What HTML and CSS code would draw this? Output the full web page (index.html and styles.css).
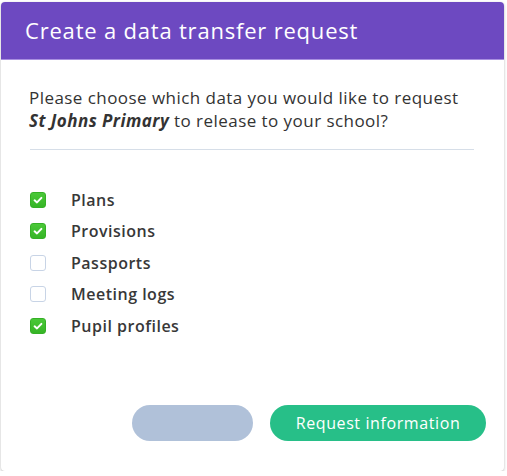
FILE: index.html
```html
<!DOCTYPE html>
<html>
<head>
<meta charset="utf-8">
<link rel="stylesheet" href="styles.css">
</head>
<body>
<div class="modal">
  <div class="modal-header">
    <h1 class="modal-title">Create a data transfer request</h1>
  </div>
  <div class="modal-body">
    <p class="intro">Please choose which data you would like to request <strong><em>St Johns Primary</em></strong> to release to your school?</p>
    <hr class="divider">
    <ul class="options">
      <li class="option"><span class="check checked"><svg viewBox="0 0 16 16" width="16" height="16"><path d="M4.6 8.3 L7 10.4 L11.4 5.9" fill="none" stroke="#fff" stroke-width="2" stroke-linecap="round" stroke-linejoin="round"/></svg></span><span class="label">Plans</span></li>
      <li class="option"><span class="check checked"><svg viewBox="0 0 16 16" width="16" height="16"><path d="M4.6 8.3 L7 10.4 L11.4 5.9" fill="none" stroke="#fff" stroke-width="2" stroke-linecap="round" stroke-linejoin="round"/></svg></span><span class="label">Provisions</span></li>
      <li class="option"><span class="check"></span><span class="label">Passports</span></li>
      <li class="option"><span class="check"></span><span class="label">Meeting logs</span></li>
      <li class="option"><span class="check checked"><svg viewBox="0 0 16 16" width="16" height="16"><path d="M4.6 8.3 L7 10.4 L11.4 5.9" fill="none" stroke="#fff" stroke-width="2" stroke-linecap="round" stroke-linejoin="round"/></svg></span><span class="label">Pupil profiles</span></li>
    </ul>
  </div>
  <div class="modal-footer">
    <button class="btn btn-muted"></button>
    <button class="btn btn-primary">Request information</button>
  </div>
</div>
</body>
</html>
```

FILE: styles.css
```css
html, body {
  margin: 0;
  padding: 0;
  background: #ffffff;
}
body {
  font-family: "Open Sans", "Noto Sans", sans-serif;
  color: #333333;
}
.modal {
  margin: 2px 3px 0 1px;
  width: 503px;
  height: 469px;
  background: #ffffff;
  border-radius: 4px;
  box-shadow: 0 1px 3px rgba(0, 0, 0, 0.28);
  display: flex;
  flex-direction: column;
  overflow: hidden;
}
.modal-header {
  background: #6d49c1;
  height: 57px;
  border-bottom: 1px solid #a88fe0;
  display: flex;
  align-items: center;
  padding: 0 24px;
}
.modal-title {
  margin: 0 0 2px;
  font-size: 22px;
  font-weight: 400;
  color: #ffffff;
  letter-spacing: 0.8px;
}
.modal-body {
  padding: 26px 30px 0 28px;
  flex: 1;
}
.intro {
  margin: 0;
  font-size: 17px;
  line-height: 23px;
  letter-spacing: 0.45px;
  color: #333333;
}
.intro strong {
  font-weight: 700;
}
.divider {
  border: 0;
  border-top: 1px solid #d6dee8;
  margin: 17px 0 0 1px;
}
.options {
  list-style: none;
  margin: 0;
  padding: 38px 0 0 1px;
  display: flex;
  flex-direction: column;
  gap: 8px;
}
.option {
  display: flex;
  align-items: center;
  height: 23.5px;
}
.check {
  width: 16px;
  height: 16px;
  box-sizing: border-box;
  border-radius: 3px;
  border: 1px solid #c8d4e6;
  background: #ffffff;
  display: flex;
  margin-right: 25px;
}
.check.checked {
  background: linear-gradient(#4ac838, #36b526);
  border-color: #35b026;
}
.check svg {
  margin: -1px;
}
.label {
  font-size: 16px;
  font-weight: 600;
  letter-spacing: 0.5px;
  color: #383838;
}
.modal-footer {
  display: flex;
  justify-content: flex-end;
  gap: 17px;
  padding: 0 18px 30px 0;
}
.btn {
  height: 36px;
  border: 0;
  border-radius: 18px;
  font-family: "Open Sans", "Noto Sans", sans-serif;
  font-size: 16px;
  letter-spacing: 0.6px;
  color: #ffffff;
  padding: 0;
}
.btn-muted {
  width: 121px;
  background: #b0c1d9;
}
.btn-primary {
  width: 216px;
  background: #27bf88;
}
```
